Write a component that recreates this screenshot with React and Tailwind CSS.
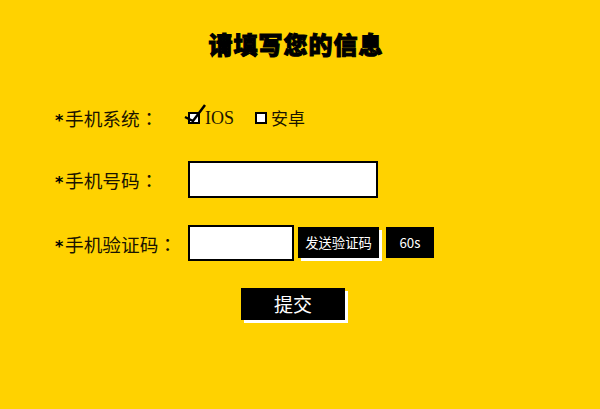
import { useState } from "react";

function Label({ text, pad = "" }) {
  return (
    <label className={`flex items-center w-[133px] shrink-0 text-[18.67px] leading-none text-[#1a1400] ${pad}`}>
      <span className="font-['DejaVu_Sans',sans-serif] w-[10px] pt-[5px] text-[16px] text-black font-bold">*</span>
      {text}
      <span className="font-['Noto_Sans_CJK_TC',sans-serif]">：</span>
    </label>
  );
}

function Check({ checked }) {
  return (
    <span className="relative block w-[12px] h-[12px] border-2 border-black bg-white shrink-0">
      {checked && (
        <svg className="absolute left-[-3px] top-[-11px] overflow-visible" width="20" height="20" viewBox="0 0 20 20" fill="none">
          <path d="M-2 14 L6 18 L18 2" stroke="#000" strokeWidth="2.5" />
        </svg>
      )}
    </span>
  );
}

export default function App() {
  const [phone, setPhone] = useState("");
  const [code, setCode] = useState("");

  return (
    <div className="w-[600px] h-[409px] bg-[#ffd200] overflow-hidden font-['Noto_Sans_CJK_SC','Liberation_Sans',sans-serif]">
      <h1 className="pt-[30px] pr-[8px] text-center text-[24px] leading-[28px] font-black text-black tracking-[1px] [-webkit-text-stroke:1px_#000]">
        请填写您的信息
      </h1>

      <div className="flex items-center pl-[55px] mt-[50px] h-[20px]">
        <Label text="手机系统" />
        <div className="flex items-center">
          <Check checked />
          <span className="ml-[5px] text-[18px] font-['Liberation_Serif',serif] text-[#1a1400]">IOS</span>
          <span className="ml-[21px]"><Check /></span>
          <span className="ml-[4px] text-[17px] text-[#1a1400]">安卓</span>
        </div>
      </div>

      <div className="flex items-center pl-[55px] mt-[33px]">
        <Label text="手机号码" pad="pt-[2px]" />
        <input
          value={phone}
          onChange={e => setPhone(e.target.value)}
          className="w-[190px] h-[37px] border-2 border-black bg-white outline-none"
        />
      </div>

      <div className="flex items-center pl-[55px] mt-[27px]">
        <Label text="手机验证码" pad="pt-[2px]" />
        <input
          value={code}
          onChange={e => setCode(e.target.value)}
          className="w-[106px] h-[36px] border-2 border-black bg-white outline-none"
        />
        <button className="ml-[4px] mb-[1px] w-[81px] h-[31px] bg-black text-white text-[13.33px] shadow-[3px_3px_0_#fff]">
          发送验证码
        </button>
        <button className="ml-[7px] mb-[1px] w-[48px] h-[31px] bg-black text-white text-[13.33px]">60s</button>
      </div>

      <div className="pl-[241px] mt-[27px]">
        <button className="block w-[104px] h-[32px] bg-black text-white text-[19px] shadow-[3px_3px_0_#fff]">提交</button>
      </div>
    </div>
  );
}
